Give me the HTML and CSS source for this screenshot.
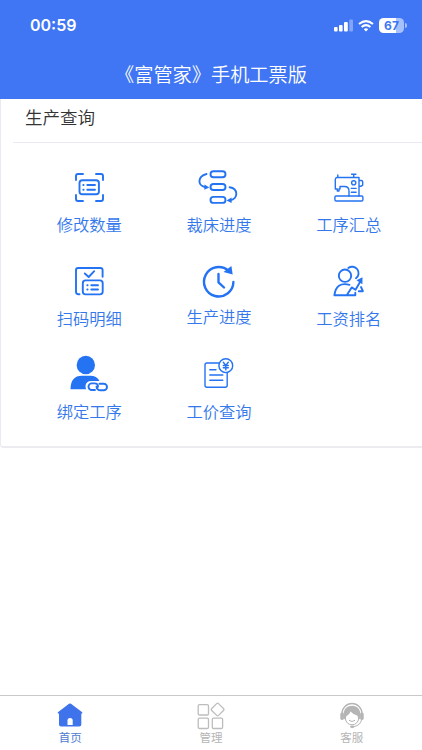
FILE: index.html
```html
<!DOCTYPE html>
<html lang="zh-CN">
<head>
<meta charset="utf-8">
<meta name="viewport" content="width=device-width, initial-scale=1">
<title>富管家</title>
<link rel="stylesheet" href="styles.css">
</head>
<body>
<div class="app">
  <header class="header">
    <div class="status">
      <span class="time">00:59</span>
      <div class="status-icons">
        <svg class="signal" width="20" height="13" viewBox="0 0 20 13" fill="#fff"><rect x="0" y="8" width="3.6" height="4.5" rx="1"/><rect x="5" y="6" width="3.6" height="6.5" rx="1"/><rect x="10" y="3" width="3.8" height="9.5" rx="1"/><rect x="15.3" y="0.5" width="3.7" height="12" rx="1" opacity=".35"/></svg>
        <svg class="wifi" width="16" height="12" viewBox="0 0 16 12" fill="none" stroke="#fff" stroke-width="2"><path d="M1 4.1Q8-1.9 15 4.1M3.6 7Q8 3.2 12.4 7"/><path d="M5.8 9.2Q8 7.4 10.2 9.2L8 11.6Z" fill="#fff" stroke="none"/></svg>
        <div class="battery"><span>67</span></div><i class="battery-tip"></i>
      </div>
    </div>
    <h1>《富管家》手机工票版</h1>
  </header>
  <main class="card">
    <h2>生产查询</h2>
    <div class="grid">
      <a class="item">
        <svg class="icon" viewBox="0 0 48 48"><path d="M11 17v-4q0-2 2-2h5M31 11h5q2 0 2 2v4M38 32v4q0 2-2 2h-5M18 38h-5q-2 0-2-2v-4"/><rect x="14.5" y="17.3" width="19.4" height="14" rx="2.8"/><path d="M18.300 22h.3M18.300 26.700h.3M22.300 22h7.700M22.300 26.700h7.700"/></svg>
        <span>修改数量</span>
      </a>
      <a class="item">
        <svg class="icon" viewBox="0 0 48 48"><rect x="15.5" y="8.2" width="15" height="6" rx="3"/><rect x="15.5" y="21" width="15" height="6" rx="3"/><rect x="15.5" y="33.9" width="15" height="6" rx="3"/><path d="M11.500 11C2.500 13.500 2 22.500 10.500 24.200M34.600 24.200C43.500 25.500 43.500 36 35 37.300"/><path class="solid" d="M9.500 21.500l4.800 2.900-5 2.400zM36.500 34.500l-5 3.100 5.200 2.400z"/></svg>
        <span>裁床进度</span>
      </a>
      <a class="item">
        <svg class="icon thin" viewBox="0 0 48 48"><rect x="9.900" y="33" width="28" height="5" rx="1.200"/><path d="M12.800 12v2.500H11.800q-1.500.3-1.500 2V26h2v2h1.700v-2h1v-2.500h4.500q4.500 0 4.500 4.500v5M12.800 14.500H34V33M28.700 14.500v-3.300M26.600 11.200h4.300M34 17.500h2.300q1.400 0 1.400 1.400v3.300l-1.500 1H34M26.300 25.400h4.800M26.300 29.200h4.800"/><circle cx="28.700" cy="19.800" r="2.100"/></svg>
        <span>工序汇总</span>
      </a>
      <a class="item">
        <svg class="icon" viewBox="0 0 48 48"><path d="M14.500 37.300h-1q-2.500 0-2.500-2.500V13.200Q11 11 13.200 11h22.200q2.200 0 2.200 2.200v6.600M19.800 16.500l3.900 3.500 5.500-5.800"/><rect x="17.800" y="23.400" width="19.900" height="14" rx="2.800"/><path d="M22.300 28.200h.3M22.300 32.500h.3M26.300 28.200h6.700M26.300 32.500h6.700"/></svg>
        <span>扫码明细</span>
      </a>
      <a class="item lifted">
        <svg class="icon bold" viewBox="0 0 48 48"><path d="M38.400 25A14.700 14.700 0 1 1 33.500 13.800M23.500 17v8.300l5.500 5.200"/><path class="solid" d="M36.400 9l1.300 8.600-9.200-2.600z"/></svg>
        <span>生产进度</span>
      </a>
      <a class="item">
        <svg class="icon" viewBox="0 0 48 48"><circle cx="20" cy="18.700" r="6.200"/><path d="M23.300 11A6.300 6.300 0 1 1 31 21.300M24.500 27.800Q11 24.500 9.400 38.300H21.700L26.700 30.400l3.800 2.300 5-8.500M21.700 38.300h8.600v-2.500M36 30l1.900 4.200h-4.100"/><path class="solid" d="M37.500 20.200l-.1 7-5.900-4z"/></svg>
        <span>工资排名</span>
      </a>
      <a class="item">
        <svg class="icon" viewBox="0 0 48 48"><circle class="solid" cx="20.800" cy="15" r="9.200"/><path class="solid" d="M5.500 39.300Q5.500 25.700 17 25.700h8Q32 25.700 34.500 31H26.500q-6 0-6 5.500 0 1.700.8 2.800z"/><path d="M30 40h-3.200a3.300 3.300 0 0 1 0-6.600h2.700c2 0 3.500 1.500 3.500 3.400M34.500 33.700h4.200a3.300 3.300 0 0 1 0 6.600h-3.400c-2 0-3.800-1.800-3.800-3.500"/></svg>
        <span>绑定工序</span>
      </a>
      <a class="item">
        <svg class="icon thin" viewBox="0 0 48 48"><path d="M23.500 13H12q-2 0-2 2v20.200q0 2 2 2h18.200q2 0 2-2V23M14.800 19.700H21M14.800 25h13M14.800 30.300h13"/><circle cx="30.800" cy="15.700" r="6.900"/><path d="M28.300 12.200l2.500 3.200 2.500-3.200M30.800 15.400v4.500M28.300 15.500h5M28.300 17.700h5"/></svg>
        <span>工价查询</span>
      </a>
    </div>
  </main>
  <nav class="tabs">
    <a class="tab active">
      <svg width="28" height="28" viewBox="0 0 28 28"><path fill="#3e73ec" d="M13 1.800q1-.7 2 0L26.200 10.300q.8 1.300-.9 1.500V22.500q0 2-2 2H5q-2 0-2-2V11.800q-2-.2-1.100-1.500z"/><path fill="#fff" d="M11.500 23v-4.500q0-2.600 2.600-2.600t2.600 2.600V23z"/></svg>
      <span>首页</span>
    </a>
    <a class="tab">
      <svg width="28" height="28" viewBox="0 0 28 28" fill="none" stroke="#bdbdbd" stroke-width="1.300"><rect x="1.200" y="2.700" width="10.300" height="10.300" rx="1.300"/><rect x="1.200" y="16.200" width="10.300" height="10.300" rx="1.300"/><rect x="15.300" y="16.200" width="10.300" height="10.300" rx="1.300"/><rect x="15.800" y="2.700" width="9.600" height="9.600" rx="1.300" transform="rotate(45 20.600 7.500)"/></svg>
      <span>管理</span>
    </a>
    <a class="tab">
      <svg width="28" height="28" viewBox="0 0 28 28"><path d="M4 11.500A10 10 0 0 1 24 11.500" fill="none" stroke="#b5b5b5" stroke-width="1.400"/><path fill="#b5b5b5" d="M5.700 16C4.500 8 8.500 3.800 14 3.800s9.500 4.200 8.300 12.200l-2 2.500q.3-3-1.100-5Q15.500 12.800 12.500 9.500 11.500 13 8.300 14.300q-.8 2-.2 4.200z"/><rect x="2.300" y="10.500" width="3.600" height="7.500" rx="1.700" fill="#b5b5b5"/><rect x="22.100" y="10.500" width="3.600" height="7.500" rx="1.700" fill="#b5b5b5"/><path d="M7 16q1.500 6.800 7 6.800t7-6.800M11 18.300q3 2.400 6 0M23.700 17q-.9 6.300-8 7.700" fill="none" stroke="#b5b5b5"/><ellipse cx="14.200" cy="24.700" rx="2.100" ry="1.300" fill="#b5b5b5"/></svg>
      <span>客服</span>
    </a>
  </nav>
</div>
</body>
</html>
```
FILE: styles.css
```css
* { box-sizing: border-box; }

body {
  margin: 0;
  background: #fff;
  font-family: "Noto Sans CJK SC", sans-serif;
}

.app {
  display: flex;
  flex-direction: column;
  height: 750px;
  overflow: hidden;
}

.header {
  flex: none;
  height: 99px;
  background: #4076f4;
  color: #fff;
}

.status {
  display: flex;
  justify-content: space-between;
  align-items: center;
  height: 51px;
  padding: 0 15px 0 30px;
}

.time {
  padding-bottom: 1px;
  font: 600 16px/20px Inter, sans-serif;
}

.status-icons {
  display: flex;
  align-items: center;
}

.wifi { margin: 0 5px 0 4px; }

.battery {
  width: 25px;
  height: 15px;
  border-radius: 4.5px;
  background: linear-gradient(90deg, #fff 67%, #a6c0fb 67%);
  color: #4076f4;
  font: 700 12px/15px Inter, sans-serif;
  text-align: center;
}

.battery-tip {
  width: 2px;
  height: 5px;
  margin-left: 1px;
  border-radius: 0 2px 2px 0;
  background: #a6c0fb;
}

h1 {
  margin: 0;
  font-size: 19.2px;
  font-weight: 350;
  line-height: 47px;
  text-align: center;
}

.card {
  flex: none;
  height: 349px;
  border-left: 1px solid #e9eaf2;
  border-bottom: 2px solid #ececf0;
  border-radius: 0 0 0 4px;
}

h2 {
  height: 44px;
  margin: 0 0 0 12px;
  padding-left: 12px;
  border-bottom: 1px solid #e9eaf5;
  color: #333;
  font-size: 17.5px;
  font-weight: 350;
  line-height: 35px;
}

.grid {
  display: grid;
  grid-template-columns: repeat(3, 129.7px);
  grid-auto-rows: 93.5px;
  margin-left: 23.5px;
  padding-top: 20px;
}

.item {
  display: flex;
  flex-direction: column;
  align-items: center;
  color: #3478eb;
  font-size: 16.3px;
  font-weight: 350;
  line-height: 24px;
}

.item span { margin-top: 1px; }
.item.lifted span { margin-top: -0.5px; }

.icon {
  width: 48px;
  height: 48px;
  fill: none;
  stroke: #2473f2;
  stroke-width: 1.9;
  stroke-linecap: round;
  stroke-linejoin: round;
}

.thin { stroke-width: 1.4; }
.bold { stroke-width: 2.4; }
.solid { fill: #2473f2; stroke: none; }

.tabs {
  display: grid;
  grid-template-columns: repeat(3, 1fr);
  height: 55px;
  margin-top: auto;
  border-top: 1px solid #c9c9c9;
}

.tab {
  display: flex;
  flex-direction: column;
  align-items: center;
  padding-top: 6px;
  color: #b5b5b5;
  font-size: 11.5px;
  line-height: 15px;
}

.active { color: #4d7cd0; }
```
